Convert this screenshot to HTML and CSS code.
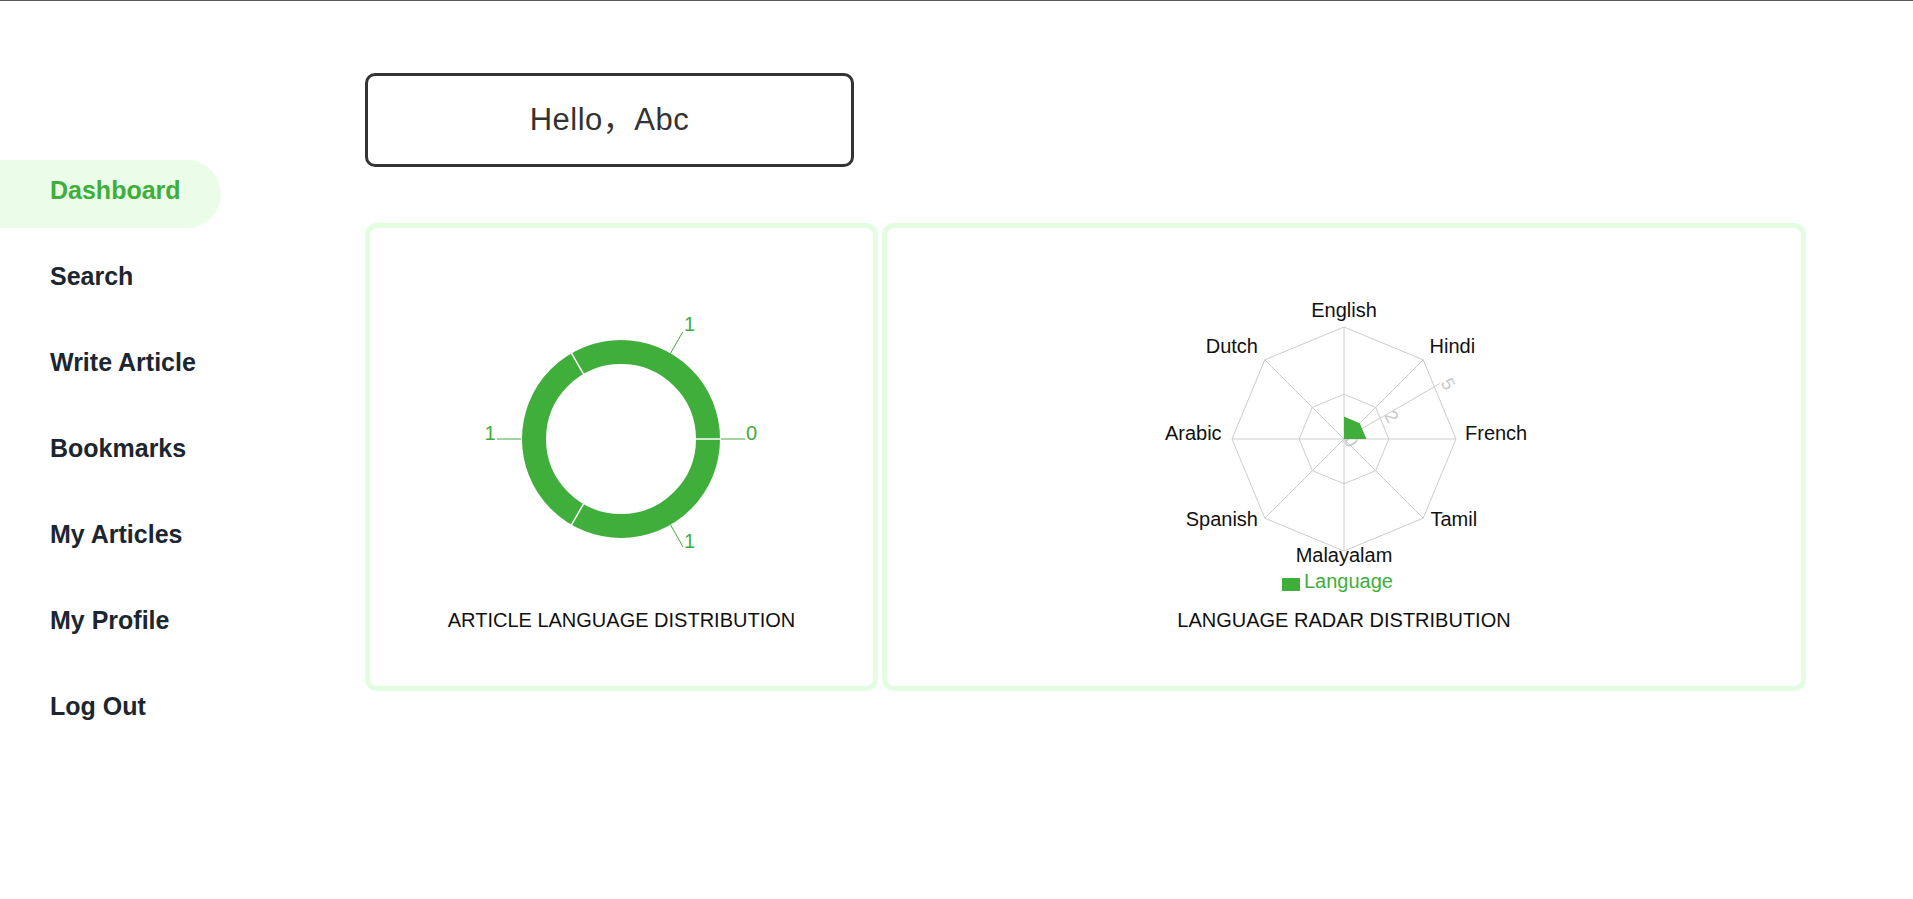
FILE: index.html
```html
<!DOCTYPE html>
<html lang="en">
<head>
<meta charset="utf-8">
<title>Dashboard</title>
<link rel="stylesheet" href="styles.css">
</head>
<body>
<div class="topline"></div>
<div class="app">
  <nav class="sidebar">
    <a class="nav-item active">Dashboard</a>
    <a class="nav-item">Search</a>
    <a class="nav-item">Write Article</a>
    <a class="nav-item">Bookmarks</a>
    <a class="nav-item">My Articles</a>
    <a class="nav-item">My Profile</a>
    <a class="nav-item">Log Out</a>
  </nav>
  <main class="main">
    <div class="greeting"><span class="greeting-text">Hello，Abc</span></div>
    <div class="cards">
      <section class="card">
        <svg class="chart" width="503" height="381" viewBox="0 0 503 381">
          <circle cx="251" cy="211" r="87" fill="none" stroke="#3fae3b" stroke-width="24"/>
          <g stroke="#ffffff" stroke-width="1.5">
            <line x1="325" y1="211" x2="351" y2="211"/>
            <line x1="214" y1="275.2" x2="201" y2="297.6"/>
            <line x1="214" y1="146.8" x2="201" y2="124.4"/>
          </g>
          <g stroke="#3fae3b" stroke-width="1" fill="none">
            <polyline points="300.5,125.3 312.7,104"/>
            <polyline points="351,211 375,211"/>
            <polyline points="151,211 127,211"/>
            <polyline points="300.5,296.7 313,319"/>
          </g>
          <g class="pie-label">
            <text x="314" y="103">1</text>
            <text x="376" y="212">0</text>
            <text x="114.5" y="212">1</text>
            <text x="314" y="320">1</text>
          </g>
        </svg>
        <h2 class="card-title">ARTICLE LANGUAGE DISTRIBUTION</h2>
      </section>
      <section class="card">
        <svg class="chart" width="914" height="381" viewBox="0 0 914 381">
          <g fill="none" stroke="#cccccc" stroke-width="1">
            <polygon points="457,99 536.2,131.8 569,211 536.2,290.2 457,323 377.8,290.2 345,211 377.8,131.8"/>
            <polygon points="457,166.2 488.7,179.3 501.8,211 488.7,242.7 457,255.8 425.3,242.7 412.2,211 425.3,179.3"/>
            <line x1="457" y1="211" x2="457" y2="99"/>
            <line x1="457" y1="211" x2="536.2" y2="131.8"/>
            <line x1="457" y1="211" x2="569" y2="211"/>
            <line x1="457" y1="211" x2="536.2" y2="290.2"/>
            <line x1="457" y1="211" x2="457" y2="323"/>
            <line x1="457" y1="211" x2="377.8" y2="290.2"/>
            <line x1="457" y1="211" x2="345" y2="211"/>
            <line x1="457" y1="211" x2="377.8" y2="131.8"/>
            <line x1="457" y1="211" x2="553" y2="155.5"/>
          </g>
          <g class="axis-label">
            <text x="464" y="213" transform="rotate(60 464 213)">0</text>
            <text x="504.5" y="188.5" transform="rotate(60 504.5 188.5)">2</text>
            <text x="561" y="156" transform="rotate(60 561 156)">5</text>
          </g>
          <polygon points="457,211 457,188.6 472.8,195.2 479.4,211" fill="#3fae3b"/>
          <g class="radar-label">
            <text x="457" y="89" text-anchor="middle">English</text>
            <text x="542.5" y="124.7">Hindi</text>
            <text x="578" y="212">French</text>
            <text x="543.5" y="297.7">Tamil</text>
            <text x="457" y="333.7" text-anchor="middle">Malayalam</text>
            <text x="371" y="297.7" text-anchor="end">Spanish</text>
            <text x="334.6" y="212" text-anchor="end">Arabic</text>
            <text x="371" y="124.7" text-anchor="end">Dutch</text>
          </g>
          <rect x="395" y="350" width="18" height="13" fill="#3fae3b"/>
          <text class="legend-text" x="417" y="360.3">Language</text>
        </svg>
        <h2 class="card-title">LANGUAGE RADAR DISTRIBUTION</h2>
      </section>
    </div>
  </main>
</div>
</body>
</html>
```

FILE: styles.css
```css
html, body {
  margin: 0;
  padding: 0;
  background: #ffffff;
}

body {
  font-family: "Liberation Sans", Arial, "Noto Sans CJK SC", sans-serif;
  color: #1b2631;
}

.topline {
  height: 1px;
  background: #5a5a5a;
}

.app {
  display: flex;
  align-items: flex-start;
}

.sidebar {
  width: 221px;
  flex: none;
  padding-top: 159px;
  display: flex;
  flex-direction: column;
  gap: 18px;
}

.nav-item {
  display: block;
  height: 68px;
  box-sizing: border-box;
  padding: 16px 0 0 50px;
  font-size: 25px;
  font-weight: 700;
  line-height: 29px;
  color: #1b2631;
  border-radius: 0 34px 34px 0;
  cursor: pointer;
}

.nav-item.active {
  background: #ebfde8;
  color: #3fae3b;
}

.main {
  flex: 1;
  padding: 72px 0 0 144px;
}

.greeting {
  width: 489px;
  height: 94px;
  box-sizing: border-box;
  border: 3px solid #333333;
  border-radius: 10px;
  display: flex;
  align-items: center;
  justify-content: center;
  font-family: "Liberation Sans", "Noto Sans CJK SC", sans-serif;
  font-size: 31px;
  line-height: 34px;
  letter-spacing: 0.5px;
  color: #333333;
}

.greeting-text {
  display: block;
  line-height: 34px;
}

.cards {
  margin-top: 56px;
  display: grid;
  grid-template-columns: 513px 924px;
  column-gap: 4px;
}

.card {
  height: 468px;
  box-sizing: border-box;
  border: 5px solid #e3fde0;
  border-radius: 12px;
  display: flex;
  flex-direction: column;
  align-items: center;
}

.chart {
  display: block;
  flex: none;
}

.card-title {
  margin: 0;
  font-size: 20px;
  font-weight: 400;
  line-height: 23px;
  color: #111111;
}

.pie-label text {
  font-family: "Liberation Sans", Arial, sans-serif;
  font-size: 20px;
  fill: #3fae3b;
}

.radar-label text {
  font-family: "Liberation Sans", Arial, sans-serif;
  font-size: 20px;
  fill: #111111;
}

.axis-label text {
  font-family: "Liberation Sans", Arial, sans-serif;
  font-size: 18px;
  fill: #c8c8c8;
  text-anchor: middle;
  dominant-baseline: central;
}

.legend-text {
  font-family: "Liberation Sans", Arial, sans-serif;
  font-size: 20px;
  fill: #3fae3b;
}
```
